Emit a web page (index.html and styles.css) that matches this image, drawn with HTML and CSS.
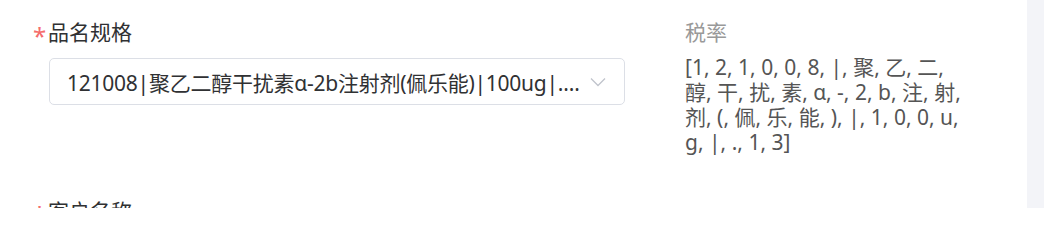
FILE: index.html
```html
<!DOCTYPE html>
<html lang="zh-CN">
<head>
<meta charset="utf-8">
<title>表单</title>
<link rel="stylesheet" href="styles.css">
</head>
<body>
<div class="page">
  <div class="main">
    <div class="col-left">
      <div class="form-item">
        <div class="label"><span class="req">*</span>品名规格</div>
        <div class="select">
          <span class="select-text">121008|聚乙二醇干扰素α-2b注射剂(佩乐能)|100ug|.13</span>
          <svg class="chevron" width="16" height="10" viewBox="0 0 16 10"><path d="M1 1.5 L8 8.5 L15 1.5" fill="none" stroke="#c0c4cc" stroke-width="1.3"/></svg>
        </div>
      </div>
      <div class="form-item next">
        <div class="label"><span class="req">*</span>客户名称</div>
      </div>
    </div>
    <div class="col-right">
      <div class="label muted">税率</div>
      <div class="value">[1, 2, 1, 0, 0, 8, |, 聚, 乙, 二, 醇, 干, 扰, 素, α, -, 2, b, 注, 射, 剂, (, 佩, 乐, 能, ), |, 1, 0, 0, u, g, |, ., 1, 3]</div>
    </div>
  </div>
  <div class="side"></div>
</div>
</body>
</html>
```
FILE: styles.css
```css
html, body {
  margin: 0;
  padding: 0;
  background: #ffffff;
}
body {
  font-family: "Noto Sans", "Noto Sans CJK SC", sans-serif;
  font-size: 21px;
  color: #303133;
}
.page {
  display: flex;
  width: 1044px;
  height: 208px;
  overflow: hidden;
}
.main {
  flex: 1;
  display: flex;
  padding-left: 33px;
  padding-top: 20px;
}
.col-left {
  width: 592px;
}
.col-right {
  margin-left: 60px;
  width: 287px;
}
.label {
  line-height: 24px;
  height: 24px;
  display: flex;
  align-items: center;
  white-space: nowrap;
}
.req {
  color: #f56c6c;
  font-size: 24px;
  width: 15px;
  margin-top: 7px;
}
.muted {
  color: #999999;
}
.select {
  margin-top: 14px;
  margin-left: 16px;
  width: 576px;
  height: 47px;
  box-sizing: border-box;
  border: 1px solid #dcdfe6;
  border-radius: 5px;
  display: flex;
  align-items: center;
  padding-left: 17px;
  padding-right: 18px;
}
.select-text {
  flex: 1;
  min-width: 0;
  white-space: nowrap;
  overflow: hidden;
  text-overflow: ellipsis;
  color: #303133;
  letter-spacing: -0.25px;
  margin-right: 9px;
}
.chevron {
  flex: none;
}
.form-item.next {
  margin-top: 94px;
}
.value {
  margin-top: 11px;
  line-height: 25px;
  color: #555555;
}
.side {
  width: 17px;
  background: #f3f4f8;
}
```
